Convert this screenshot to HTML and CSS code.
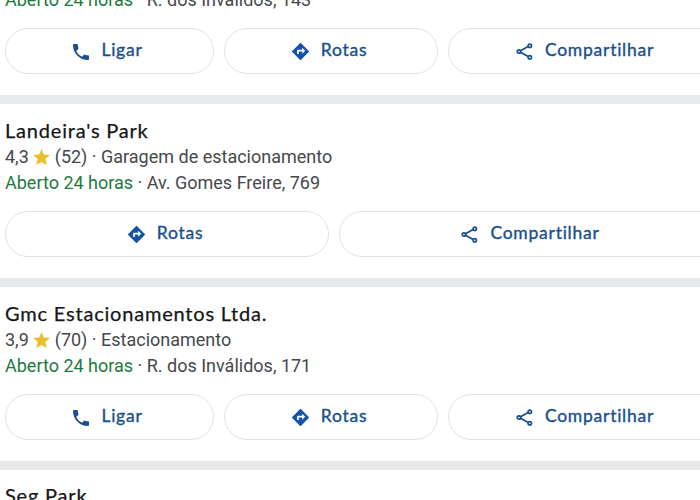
FILE: index.html
```
<!DOCTYPE html>
<html lang="pt-BR">
<head>
  <meta charset="UTF-8" />
  <meta name="viewport" content="width=device-width, initial-scale=1.0" />
  <title>Estacionamentos</title>
  <link rel="stylesheet" href="styles.css">
</head>
<body>
  <svg class="sprite" width="0" height="0">
    <symbol id="icon-call" viewBox="3 3 18 18">
      <path d="M6.6 10.8c1.4 2.8 3.8 5.2 6.6 6.6l2.2-2.2c.3-.3.7-.4 1-.2 1.1.4 2.3.6 3.6.6.6 0 1 .4 1 1V20c0 .6-.4 1-1 1C10.6 21 3 13.4 3 4c0-.6.4-1 1-1h3.5c.6 0 1 .4 1 1 0 1.3.2 2.5.6 3.6.1.3 0 .7-.2 1z"/>
    </symbol>
    <symbol id="icon-route" viewBox="2 2 20 20">
      <path d="M21.7 11.3l-9-9a1 1 0 0 0-1.4 0l-9 9a1 1 0 0 0 0 1.4l9 9c.4.4 1 .4 1.4 0l9-9c.4-.4.4-1 0-1.4zM14 14.5V12h-4v3H8v-4c0-.6.4-1 1-1h5V7.5l3.5 3.5z"/>
    </symbol>
    <symbol id="icon-share" viewBox="0 0 18 18">
      <g fill="none" stroke="currentColor" stroke-width="1.8">
        <path d="M4.8 8.2L12.8 3.7M4.8 9.8L12.8 14.3"/>
        <circle cx="3.1" cy="9" r="1.8"/>
        <circle cx="14.6" cy="2.9" r="1.8"/>
        <circle cx="14.6" cy="15.1" r="1.8"/>
      </g>
    </symbol>
    <symbol id="icon-star" viewBox="2 2 20 19">
      <path d="M12 17.3l6.2 3.7-1.6-7L22 9.2l-7.2-.6L12 2 9.200 8.600 2 9.200 7.500 14l-1.700 7z"/>
    </symbol>
  </svg>

  <div class="results">
    <div class="place">
      <h2 class="name">Estacionamento</h2>
      <p class="rating">4,0 <svg class="star"><use href="#icon-star"/></svg> (60) · Estacionamento</p>
      <p class="address"><span class="open">Aberto 24 horas</span> · R. dos Inválidos, 143</p>
      <div class="actions">
        <a class="button call"><svg class="icon"><use href="#icon-call"/></svg><span class="label">Ligar</span></a>
        <a class="button route"><svg class="icon"><use href="#icon-route"/></svg><span class="label">Rotas</span></a>
        <a class="button share"><svg class="icon"><use href="#icon-share"/></svg><span class="label">Compartilhar</span></a>
      </div>
    </div>

    <div class="place">
      <h2 class="name">Landeira's Park</h2>
      <p class="rating">4,3 <svg class="star"><use href="#icon-star"/></svg> (52) · Garagem de estacionamento</p>
      <p class="address"><span class="open">Aberto 24 horas</span> · Av. Gomes Freire, 769</p>
      <div class="actions">
        <a class="button route wide"><svg class="icon"><use href="#icon-route"/></svg><span class="label">Rotas</span></a>
        <a class="button share"><svg class="icon"><use href="#icon-share"/></svg><span class="label">Compartilhar</span></a>
      </div>
    </div>

    <div class="place">
      <h2 class="name">Gmc Estacionamentos Ltda.</h2>
      <p class="rating">3,9 <svg class="star"><use href="#icon-star"/></svg> (70) · Estacionamento</p>
      <p class="address"><span class="open">Aberto 24 horas</span> · R. dos Inválidos, 171</p>
      <div class="actions">
        <a class="button call"><svg class="icon"><use href="#icon-call"/></svg><span class="label">Ligar</span></a>
        <a class="button route"><svg class="icon"><use href="#icon-route"/></svg><span class="label">Rotas</span></a>
        <a class="button share"><svg class="icon"><use href="#icon-share"/></svg><span class="label">Compartilhar</span></a>
      </div>
    </div>

    <div class="place last">
      <h2 class="name">Seg Park</h2>
    </div>
  </div>
</body>
</html>
```
FILE: styles.css
```
body {
  margin: 0;
  height: 500px;
  overflow: hidden;
  background: #fff;
  font-family: Roboto, sans-serif;
  color: #46484b;
}
.sprite {
  display: block;
}
.results {
  width: 722px;
  margin-top: -79px;
}
.place {
  box-sizing: border-box;
  height: 183px;
  padding: 13px 0 0 5px;
  border-bottom: 9px solid #e8e9ea;
}
.place.last {
  height: auto;
  padding-top: 12px;
  border-bottom: none;
}
.name {
  margin: 0;
  font-family: Lato, sans-serif;
  font-size: 20px;
  font-weight: 400;
  line-height: 27px;
  letter-spacing: 0.8px;
  color: #151617;
  -webkit-text-stroke: 0.25px #151617;
  white-space: nowrap;
}
.rating,
.address {
  margin: 0;
  font-size: 18px;
  line-height: 25px;
  white-space: nowrap;
}
.rating {
  line-height: 26px;
}
.open {
  color: #1c7a3f;
}
.star {
  width: 17px;
  height: 16px;
  fill: #eabf2c;
  vertical-align: -2px;
}
.actions {
  display: flex;
  gap: 10px;
  margin-top: 16px;
}
.button {
  box-sizing: border-box;
  display: flex;
  align-items: center;
  justify-content: center;
  gap: 12px;
  height: 46px;
  border: 1px solid #dfe1e3;
  border-radius: 23px;
  color: #184f8c;
}
.call {
  width: 209px;
  padding-right: 3px;
}
.route {
  width: 214px;
  padding-right: 3px;
}
.route.wide {
  width: 324px;
}
.share {
  flex: 1;
}
.icon {
  width: 17px;
  height: 17px;
  fill: currentColor;
  margin-top: 1px;
}
.call .icon {
  width: 16px;
  height: 16px;
}
.route .icon {
  color: #1553a8;
}
.label {
  font-family: Lato, sans-serif;
  font-size: 17.5px;
  line-height: 22px;
  letter-spacing: 0.75px;
  -webkit-text-stroke: 0.35px #184f8c;
  margin-top: -3px;
}
```
